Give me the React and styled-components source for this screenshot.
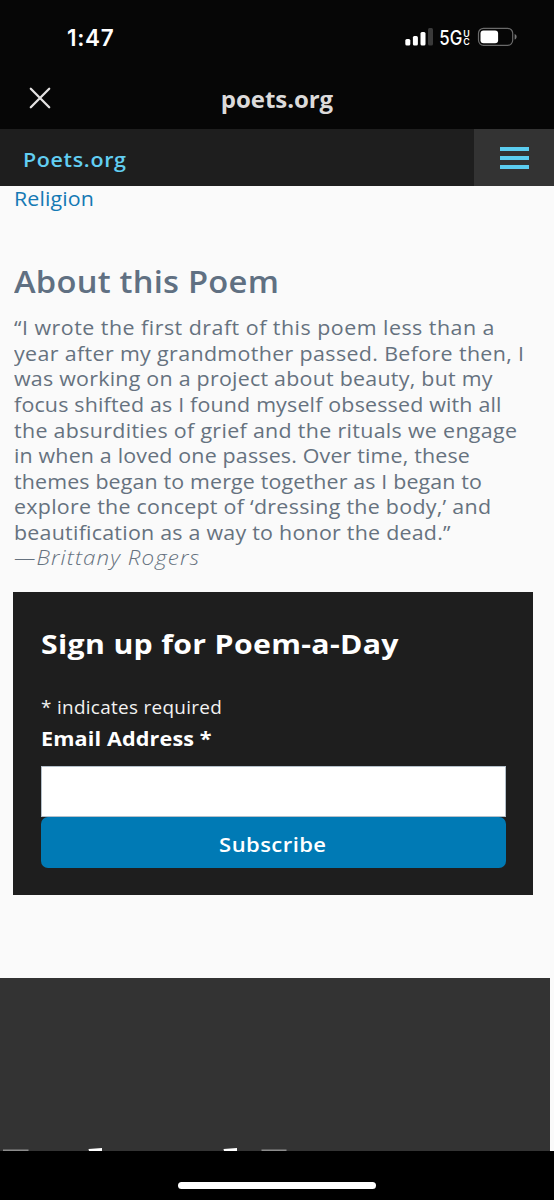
import React from "react";
import styled, { createGlobalStyle } from "styled-components";

const GlobalStyle = createGlobalStyle`
  *, *::before, *::after { box-sizing: border-box; }
  body {
    margin: 0;
    background: #fafafa;
    font-family: "Open Sans", "Noto Sans", sans-serif;
  }
`;

const Screen = styled.div`
  display: flex;
  flex-direction: column;
  width: 554px;
  height: 1200px;
  overflow: hidden;
  background: #fafafa;
`;

const StatusBar = styled.div`
  flex: none;
  display: flex;
  align-items: flex-start;
  justify-content: space-between;
  height: 73px;
  padding: 23px 36px 0 67px;
  background: #060606;
  color: #fff;
`;

const Clock = styled.time`
  font: 600 22.5px/29px Inter, sans-serif;
  letter-spacing: 0.7px;
`;

const StatusIcons = styled.svg`
  display: block;
  width: 114px;
  height: 26px;
`;

const BrowserBar = styled.header`
  flex: none;
  display: grid;
  grid-template-columns: 80px 1fr 80px;
  align-items: center;
  height: 56px;
  padding-bottom: 6px;
  background: #060606;
`;

const CloseButton = styled.button`
  width: 80px;
  height: 50px;
  padding: 0 0 0 29px;
  border: 0;
  background: none;
  color: #e4e2e2;
  text-align: left;

  svg { display: block; }
`;

const PageTitle = styled.div`
  padding-top: 1px;
  color: #dcdada;
  font-size: 24px;
  font-weight: 700;
  line-height: 34px;
  text-align: center;
  letter-spacing: -0.05px;
`;

const SiteNav = styled.nav`
  flex: none;
  display: flex;
  align-items: stretch;
  justify-content: space-between;
  height: 57px;
  padding-left: 22.5px;
  background: #1e1e1e;
`;

const Wide = styled.span`
  display: inline-block;
  white-space: nowrap;
  transform: scaleX(${(p) => p.$by});
  transform-origin: ${(p) => p.$from || "left"} center;
`;

const Brand = styled.a`
  color: #62cef2;
  font-size: 19.5px;
  font-weight: 600;
  line-height: 61px;
  letter-spacing: 0.6px;
`;

const MenuButton = styled.button`
  display: flex;
  flex-direction: column;
  gap: 5px;
  width: 80px;
  padding: 18px 26px 0;
  border: 0;
  background: #333;
`;

const MenuLine = styled.span`
  height: 4px;
  width: 28.5px;
  background: #5bcdf0;
`;

const Main = styled.main`
  flex: none;
  height: 792px;
  padding: 1px 21px 0 13px;
`;

const ThemeLink = styled.a`
  display: block;
  padding-left: 0.5px;
  color: #1479b4;
  font-size: 20px;
  line-height: 24px;
  letter-spacing: 0.12px;
`;

const Heading = styled.h2`
  margin: 53px 0 15.4px;
  padding-left: 0.8px;
  color: #607082;
  font-size: 30px;
  font-weight: 600;
  line-height: 36px;
  letter-spacing: 0.22px;
`;

const About = styled.p`
  margin: 0 0 21.1px;
  padding-left: 0.8px;
  color: #66727f;
  font-size: 20px;
  line-height: 25.55px;
`;

const Line = styled.span`
  display: block;
  width: max-content;
  white-space: nowrap;
  letter-spacing: ${(p) => p.$track}px;
  transform: scaleX(1.07);
  transform-origin: left center;
`;

const Credit = styled.em`
  display: block;
  width: max-content;
  font-weight: 340;
  letter-spacing: 0.95px;
  transform: scaleX(1.12);
  transform-origin: left center;
`;

const SignUp = styled.form`
  display: flex;
  flex-direction: column;
  height: 303.5px;
  padding: 35.5px 27.5px 0;
  background: #1e1e1e;
  color: #fff;
`;

const SignUpTitle = styled.h3`
  margin: 0 0 34px;
  font-size: 27px;
  font-weight: 700;
  line-height: 34px;
  letter-spacing: 0.3px;
`;

const Hint = styled.div`
  margin-bottom: 7px;
  color: #f2f2f2;
  font-size: 17.5px;
  line-height: 24px;
  letter-spacing: 0.28px;
`;

const Label = styled.label`
  margin-bottom: 13.5px;
  font-size: 20px;
  font-weight: 700;
  line-height: 26px;
  letter-spacing: 0.12px;
`;

const Field = styled.input`
  width: 100%;
  height: 51px;
  padding: 0 12px;
  border: 1px solid #b4c0ca;
  border-radius: 0;
  background: #fff;
  font: inherit;
`;

const Subscribe = styled.button`
  height: 51px;
  padding: 3px 0 0;
  border: 0;
  border-radius: 7px;
  background: #007ab5;
  color: #fff;
  font: 600 20px/50px "Open Sans", sans-serif;
  letter-spacing: 0.4px;
`;

const Footer = styled.footer`
  flex: 1;
  display: flex;
  align-items: flex-end;
  width: 550px;
  background: #333;

  svg { display: block; }
`;

const HomeArea = styled.div`
  flex: none;
  display: flex;
  justify-content: center;
  height: 49px;
  padding-top: 30.5px;
  background: #000;
`;

const HomeIndicator = styled.div`
  width: 198px;
  height: 7px;
  border-radius: 4px;
  background: #fff;
`;

const aboutLines = [
  ["“I wrote the first draft of this poem less than a", 0.456],
  ["year after my grandmother passed. Before then, I", 0.335],
  ["was working on a project about beauty, but my", 0.23],
  ["focus shifted as I found myself obsessed with all", 0.17],
  ["the absurdities of grief and the rituals we engage", 0.3],
  ["in when a loved one passes. Over time, these", 0.16],
  ["themes began to merge together as I began to", 0.137],
  ["explore the concept of ‘dressing the body,’ and", 0.26],
  ["beautification as a way to honor the dead.”", 0.23],
];

export default function App() {
  return (
    <Screen>
      <GlobalStyle />
      <StatusBar>
        <Clock>1:47</Clock>
        <StatusIcons viewBox="404 23 114 26">
          <g fill="#fff">
            <rect x="405.3" y="39" width="5" height="6.6" rx="1.5" />
            <rect x="412.9" y="36" width="5" height="9.6" rx="1.5" />
            <rect x="420.5" y="32" width="5" height="13.6" rx="1.5" />
            <rect x="428" y="28" width="5" height="17.6" rx="1.5" fill="#3a3a3a" />
            <text x="439.3" y="45" fontFamily="Inter" fontWeight="500" fontSize="20" textLength="23" lengthAdjust="spacingAndGlyphs">5G</text>
            <text x="463.2" y="36.6" fontFamily="Inter" fontWeight="600" fontSize="8.8">U</text>
            <text x="463.2" y="45.2" fontFamily="Inter" fontWeight="600" fontSize="8.8">C</text>
            <rect x="480.5" y="30.4" width="17.6" height="12.8" rx="3" />
          </g>
          <rect x="478.5" y="28.3" width="34.2" height="17" rx="5" fill="none" stroke="#6a6a6a" strokeWidth="1.2" />
          <path d="M514.6 34v5.6c1.3-.4 2-1.5 2-2.8s-.7-2.4-2-2.8z" fill="#777" />
        </StatusIcons>
      </StatusBar>
      <BrowserBar>
        <CloseButton aria-label="Close">
          <svg width="22" height="22" viewBox="0 0 22 22" fill="none" stroke="currentColor" strokeWidth="2.3" strokeLinecap="round">
            <path d="M1.8 1.8 20.2 20.2M20.2 1.8 1.8 20.2" />
          </svg>
        </CloseButton>
        <PageTitle>poets.org</PageTitle>
      </BrowserBar>
      <SiteNav>
        <Brand><Wide $by={1.1}>Poets.org</Wide></Brand>
        <MenuButton aria-label="Menu">
          <MenuLine />
          <MenuLine />
          <MenuLine />
        </MenuButton>
      </SiteNav>
      <Main>
        <ThemeLink><Wide $by={1.07}>Religion</Wide></ThemeLink>
        <Heading><Wide $by={1.09}>About this Poem</Wide></Heading>
        <About>
          {aboutLines.map(([text, track]) => (
            <Line key={text} $track={track}>{text}</Line>
          ))}
          <Credit>—Brittany Rogers</Credit>
        </About>
        <SignUp>
          <SignUpTitle><Wide $by={1.12}>Sign up for Poem-a-Day</Wide></SignUpTitle>
          <Hint><Wide $by={1.08}>* indicates required</Wide></Hint>
          <Label htmlFor="email"><Wide $by={1.08}>Email Address *</Wide></Label>
          <Field id="email" type="email" />
          <Subscribe type="button"><Wide $by={1.1} $from="center">Subscribe</Wide></Subscribe>
        </SignUp>
      </Main>
      <Footer>
        <svg width="300" height="4" viewBox="0 0 300 4">
          <path d="M3 2.6H28.500V4H3zM261.500 2.6h25V4h-25z" fill="#8c8c8c" />
          <path d="M88.5 2 102 1v3H89zM223.5 2 237 1v3h-13z" fill="#fff" />
        </svg>
      </Footer>
      <HomeArea>
        <HomeIndicator />
      </HomeArea>
    </Screen>
  );
}
